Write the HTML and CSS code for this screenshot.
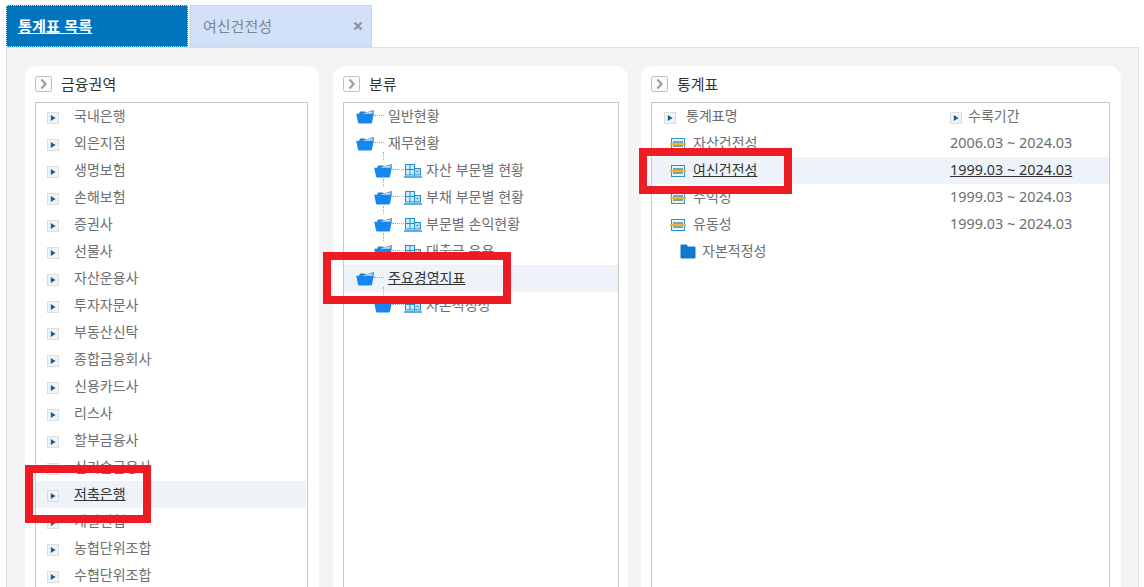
FILE: index.html
```html
<!DOCTYPE html>
<html lang="ko">
<head>
<meta charset="utf-8">
<title>통계표 목록</title>
<link rel="stylesheet" href="styles.css">
</head>
<body>
<svg class="defs" width="0" height="0" aria-hidden="true">
  <symbol id="i-bullet" viewBox="0 0 12 12">
    <rect x=".5" y=".5" width="11" height="11" fill="#f1f4f7" stroke="#dadde1"/>
    <path d="M3.800 3 8.600 6 3.800 9Z" fill="#0f6198"/>
  </symbol>
  <symbol id="i-head" viewBox="0 0 17 16">
    <rect x=".5" y=".5" width="16" height="15" rx="2" fill="#fbfbfb" stroke="#bdbdbd"/>
    <path d="M6.500 3.500 10.500 8 6.500 12.500" fill="none" stroke="#a3a3a3" stroke-width="2.400"/>
  </symbol>
  <symbol id="i-open" viewBox="0 0 18 14">
    <path d="M3 4 4 1.500H9L10 2.500 17.800 0 17.600 4Z" fill="#2c80c0"/>
    <path d="M7 4 8 3 16.800 1.200 16.400 4Z" fill="#c4ddf0"/>
    <path d="M.2 3.800H17.800L16 12.400Q15.800 13.500 14.800 13.500H3.200Q2.200 13.500 2 12.400Z" fill="#1587ee"/>
  </symbol>
  <symbol id="i-closed" viewBox="0 0 16 15">
    <path d="M.5 1.500A1 1 0 0 1 1.500 .5H6.500L8 2.500H14.500A1 1 0 0 1 15.500 3.500V13.500A1 1 0 0 1 14.500 14.500H1.500A1 1 0 0 1 .5 13.500Z" fill="#1078cf"/>
  </symbol>
  <symbol id="i-bldg" viewBox="0 0 18 15">
    <rect x="1.500" y="1.500" width="9" height="10.500" fill="#d6ecfa" stroke="#1f8fd4"/>
    <path d="M6 1.500V12M1.500 6.500H10.500" stroke="#1f8fd4"/>
    <rect x="10.500" y="5.500" width="6" height="6.500" fill="#b9dcf3" stroke="#1f8fd4"/>
    <path d="M12.500 8.500H14.500" stroke="#1f8fd4"/>
    <path d="M0 14H18" stroke="#1f8fd4" stroke-width="1.400"/>
  </symbol>
  <symbol id="i-table" viewBox="0 0 16 12">
    <rect x="1.500" y=".5" width="13" height="11" fill="#e8f4fb" stroke="#2b93cf"/>
    <rect x="3" y="3" width="10" height="6" fill="#7da79c"/>
    <path d="M0 6H16" stroke="#efb13f" stroke-width="2"/>
  </symbol>
  <symbol id="i-x" viewBox="0 0 10 10">
    <path d="M1.500 1.500 8.500 8.500M8.500 1.500 1.500 8.500" fill="none" stroke="#8c979e" stroke-width="2.400"/>
  </symbol>
</svg>

<nav class="tabs">
  <a class="tab tab-active">통계표 목록</a>
  <a class="tab tab-idle"><span>여신건전성</span><svg class="i-x"><use href="#i-x"/></svg></a>
</nav>

<main class="board">
  <section class="panel panel-a">
    <h2 class="panel-title"><svg class="i-head"><use href="#i-head"/></svg>금융권역</h2>
    <div class="list">
      <div class="row"><svg class="i-bullet"><use href="#i-bullet"/></svg><span>국내은행</span></div>
      <div class="row"><svg class="i-bullet"><use href="#i-bullet"/></svg><span>외은지점</span></div>
      <div class="row"><svg class="i-bullet"><use href="#i-bullet"/></svg><span>생명보험</span></div>
      <div class="row"><svg class="i-bullet"><use href="#i-bullet"/></svg><span>손해보험</span></div>
      <div class="row"><svg class="i-bullet"><use href="#i-bullet"/></svg><span>증권사</span></div>
      <div class="row"><svg class="i-bullet"><use href="#i-bullet"/></svg><span>선물사</span></div>
      <div class="row"><svg class="i-bullet"><use href="#i-bullet"/></svg><span>자산운용사</span></div>
      <div class="row"><svg class="i-bullet"><use href="#i-bullet"/></svg><span>투자자문사</span></div>
      <div class="row"><svg class="i-bullet"><use href="#i-bullet"/></svg><span>부동산신탁</span></div>
      <div class="row"><svg class="i-bullet"><use href="#i-bullet"/></svg><span>종합금융회사</span></div>
      <div class="row"><svg class="i-bullet"><use href="#i-bullet"/></svg><span>신용카드사</span></div>
      <div class="row"><svg class="i-bullet"><use href="#i-bullet"/></svg><span>리스사</span></div>
      <div class="row"><svg class="i-bullet"><use href="#i-bullet"/></svg><span>할부금융사</span></div>
      <div class="row"><svg class="i-bullet"><use href="#i-bullet"/></svg><span>신기술금융사</span></div>
      <div class="row row-on row-short"><svg class="i-bullet"><use href="#i-bullet"/></svg><span>저축은행</span></div>
      <div class="row"><svg class="i-bullet"><use href="#i-bullet"/></svg><span>개별신협</span></div>
      <div class="row"><svg class="i-bullet"><use href="#i-bullet"/></svg><span>농협단위조합</span></div>
      <div class="row"><svg class="i-bullet"><use href="#i-bullet"/></svg><span>수협단위조합</span></div>
    </div>
  </section>

  <section class="panel panel-b">
    <h2 class="panel-title"><svg class="i-head"><use href="#i-head"/></svg>분류</h2>
    <div class="list">
      <div class="tree"><svg class="i-open"><use href="#i-open"/></svg><i class="dots"></i><span>일반현황</span></div>
      <div class="tree"><svg class="i-open"><use href="#i-open"/></svg><i class="dots"></i><span>재무현황</span></div>
      <div class="tree tree-sub"><svg class="i-open"><use href="#i-open"/></svg><i class="dots dots-long"></i><svg class="i-bldg"><use href="#i-bldg"/></svg><span>자산 부문별 현황</span></div>
      <div class="tree tree-sub"><svg class="i-open"><use href="#i-open"/></svg><i class="dots dots-long"></i><svg class="i-bldg"><use href="#i-bldg"/></svg><span>부채 부문별 현황</span></div>
      <div class="tree tree-sub"><svg class="i-open"><use href="#i-open"/></svg><i class="dots dots-long"></i><svg class="i-bldg"><use href="#i-bldg"/></svg><span>부문별 손익현황</span></div>
      <div class="tree tree-sub"><svg class="i-open"><use href="#i-open"/></svg><i class="dots dots-long"></i><svg class="i-bldg"><use href="#i-bldg"/></svg><span>대출금 운용</span></div>
      <div class="tree row-on"><svg class="i-open"><use href="#i-open"/></svg><i class="dots"></i><span>주요경영지표</span></div>
      <div class="tree tree-sub"><svg class="i-open"><use href="#i-open"/></svg><i class="dots dots-long"></i><svg class="i-bldg"><use href="#i-bldg"/></svg><span>자본적정성</span></div>
    </div>
  </section>

  <section class="panel panel-c">
    <h2 class="panel-title"><svg class="i-head"><use href="#i-head"/></svg>통계표</h2>
    <div class="list">
      <div class="stat stat-head">
        <div class="cell-name"><svg class="i-bullet"><use href="#i-bullet"/></svg><span>통계표명</span></div>
        <div class="cell-date"><svg class="i-bullet"><use href="#i-bullet"/></svg><span>수록기간</span></div>
      </div>
      <div class="stat">
        <div class="cell-name"><svg class="i-table"><use href="#i-table"/></svg><span>자산건전성</span></div>
        <div class="cell-date"><span class="num">2006.03 ~ 2024.03</span></div>
      </div>
      <div class="stat row-on">
        <div class="cell-name"><svg class="i-table"><use href="#i-table"/></svg><span>여신건전성</span></div>
        <div class="cell-date"><span class="num">1999.03 ~ 2024.03</span></div>
      </div>
      <div class="stat">
        <div class="cell-name"><svg class="i-table"><use href="#i-table"/></svg><span>수익성</span></div>
        <div class="cell-date"><span class="num">1999.03 ~ 2024.03</span></div>
      </div>
      <div class="stat">
        <div class="cell-name"><svg class="i-table"><use href="#i-table"/></svg><span>유동성</span></div>
        <div class="cell-date"><span class="num">1999.03 ~ 2024.03</span></div>
      </div>
      <div class="stat">
        <div class="cell-name cell-folder"><svg class="i-closed"><use href="#i-closed"/></svg><span>자본적정성</span></div>
      </div>
    </div>
  </section>
</main>

<div class="mark mark-a"></div>
<div class="mark mark-b"></div>
<div class="mark mark-c"></div>
</body>
</html>
```
FILE: styles.css
```css
* { box-sizing: border-box; }

html, body {
  margin: 0;
  height: 587px;
  overflow: hidden;
  background: #fff;
}

body {
  position: relative;
  padding: 5px 0 0 6px;
  font-family: "Noto Sans CJK KR", "Noto Sans", sans-serif;
  font-size: 14px;
  color: #6e6e6e;
}

.defs { position: absolute; }

.tabs {
  display: flex;
  gap: 2px;
  height: 42px;
}

.tab {
  display: flex;
  align-items: center;
  width: 182px;
  font-size: 15px;
}

.tab span, .tab-active { padding-bottom: 2px; }

.tab-active {
  padding-left: 12px;
  background: #0075bd;
  outline: 1px dotted #bfe0f2;
  outline-offset: -1px;
  color: #fff;
  font-weight: 700;
  font-size: 15.200px;
  text-decoration: underline;
}

.tab-idle {
  justify-content: space-between;
  width: 182px;
  padding: 0 8px 0 12px;
  background: #d2e1f8;
  border: 1px solid #c6d7f0;
  color: #7d868f;
}

.i-x { width: 10px; height: 10px; }

.board {
  display: grid;
  grid-template-columns: 294px 295px 479px;
  column-gap: 14px;
  width: 1133px;
  height: 560px;
  padding: 18px 0 0 18px;
  background: #f3f3f3;
  border: 1px solid #dedede;
}

.panel {
  height: 540px;
  padding: 0 10px;
  background: #fff;
  border: 1px solid #fff;
  border-radius: 12px;
}

.panel-c { margin-left: -1px; }

.panel-title {
  display: flex;
  align-items: center;
  gap: 9px;
  height: 35px;
  margin: 0 -1px;
  padding-bottom: 2px;
  color: #333;
  font-size: 15px;
  font-weight: 400;
}

.i-head { width: 17px; height: 16px; }

.list {
  height: 500px;
  margin: 0 -1px;
  border: 1px solid #c8c8c8;
}

.panel-a .list { margin-right: 0; }
.panel-b .list { margin-right: -2px; }
.panel-c .list { margin-right: 0; }

.row, .tree, .stat {
  height: 27px;
  line-height: 26px;
  white-space: nowrap;
}

.row span, .tree span, .stat span { margin-bottom: 4px; }

.row {
  display: flex;
  align-items: center;
  padding-left: 11px;
}

.row-short { margin-right: 1px; }

.i-bullet {
  flex: none;
  width: 12px;
  height: 12px;
  margin-top: 3px;
}

.row .i-bullet { margin-right: 15px; }

.row-on { background: #eef3fa; color: #333; }
.row-on span { text-decoration: underline; }

.stat .num {
  margin-bottom: 2px;
  font-family: "Noto Sans", sans-serif;
  font-size: 14.400px;
}

.tree {
  position: relative;
  display: flex;
  align-items: center;
  padding-left: 12px;
}

.tree-sub { padding-left: 30px; }

.tree-sub::before {
  content: "";
  position: absolute;
  left: 39px;
  top: -5px;
  height: 8px;
  border-left: 1px dotted #aaa;
}

.i-open { flex: none; width: 18px; height: 14px; }

.dots {
  flex: none;
  width: 10px;
  height: 0;
  margin: -3px 4px 0 0;
  border-top: 1px dotted #aaa;
}

.dots-long { width: 12px; margin-right: 0; }

.i-bldg {
  flex: none;
  width: 18px;
  height: 15px;
  margin-right: 4px;
}

.stat { display: flex; }

.cell-name {
  display: flex;
  align-items: center;
  flex: none;
  width: 298px;
  padding-left: 18px;
}

.stat-head .cell-name { padding-left: 12px; }
.stat-head .i-bullet { margin-right: 10px; }

.cell-date {
  display: flex;
  align-items: center;
}

.stat-head .cell-date .i-bullet { margin-right: 6px; }

.i-table {
  flex: none;
  width: 16px;
  height: 12px;
  margin-right: 7px;
}

.cell-folder { padding-left: 28px; }

.i-closed {
  flex: none;
  width: 16px;
  height: 15px;
  margin-right: 6px;
}

.mark {
  position: absolute;
  border: 8px solid #ed1c24;
}

.mark-a { left: 25px; top: 465px; width: 126px; height: 58px; }
.mark-b { left: 323px; top: 252px; width: 188px; height: 52px; }
.mark-c { left: 639px; top: 148px; width: 153px; height: 46px; }
```
